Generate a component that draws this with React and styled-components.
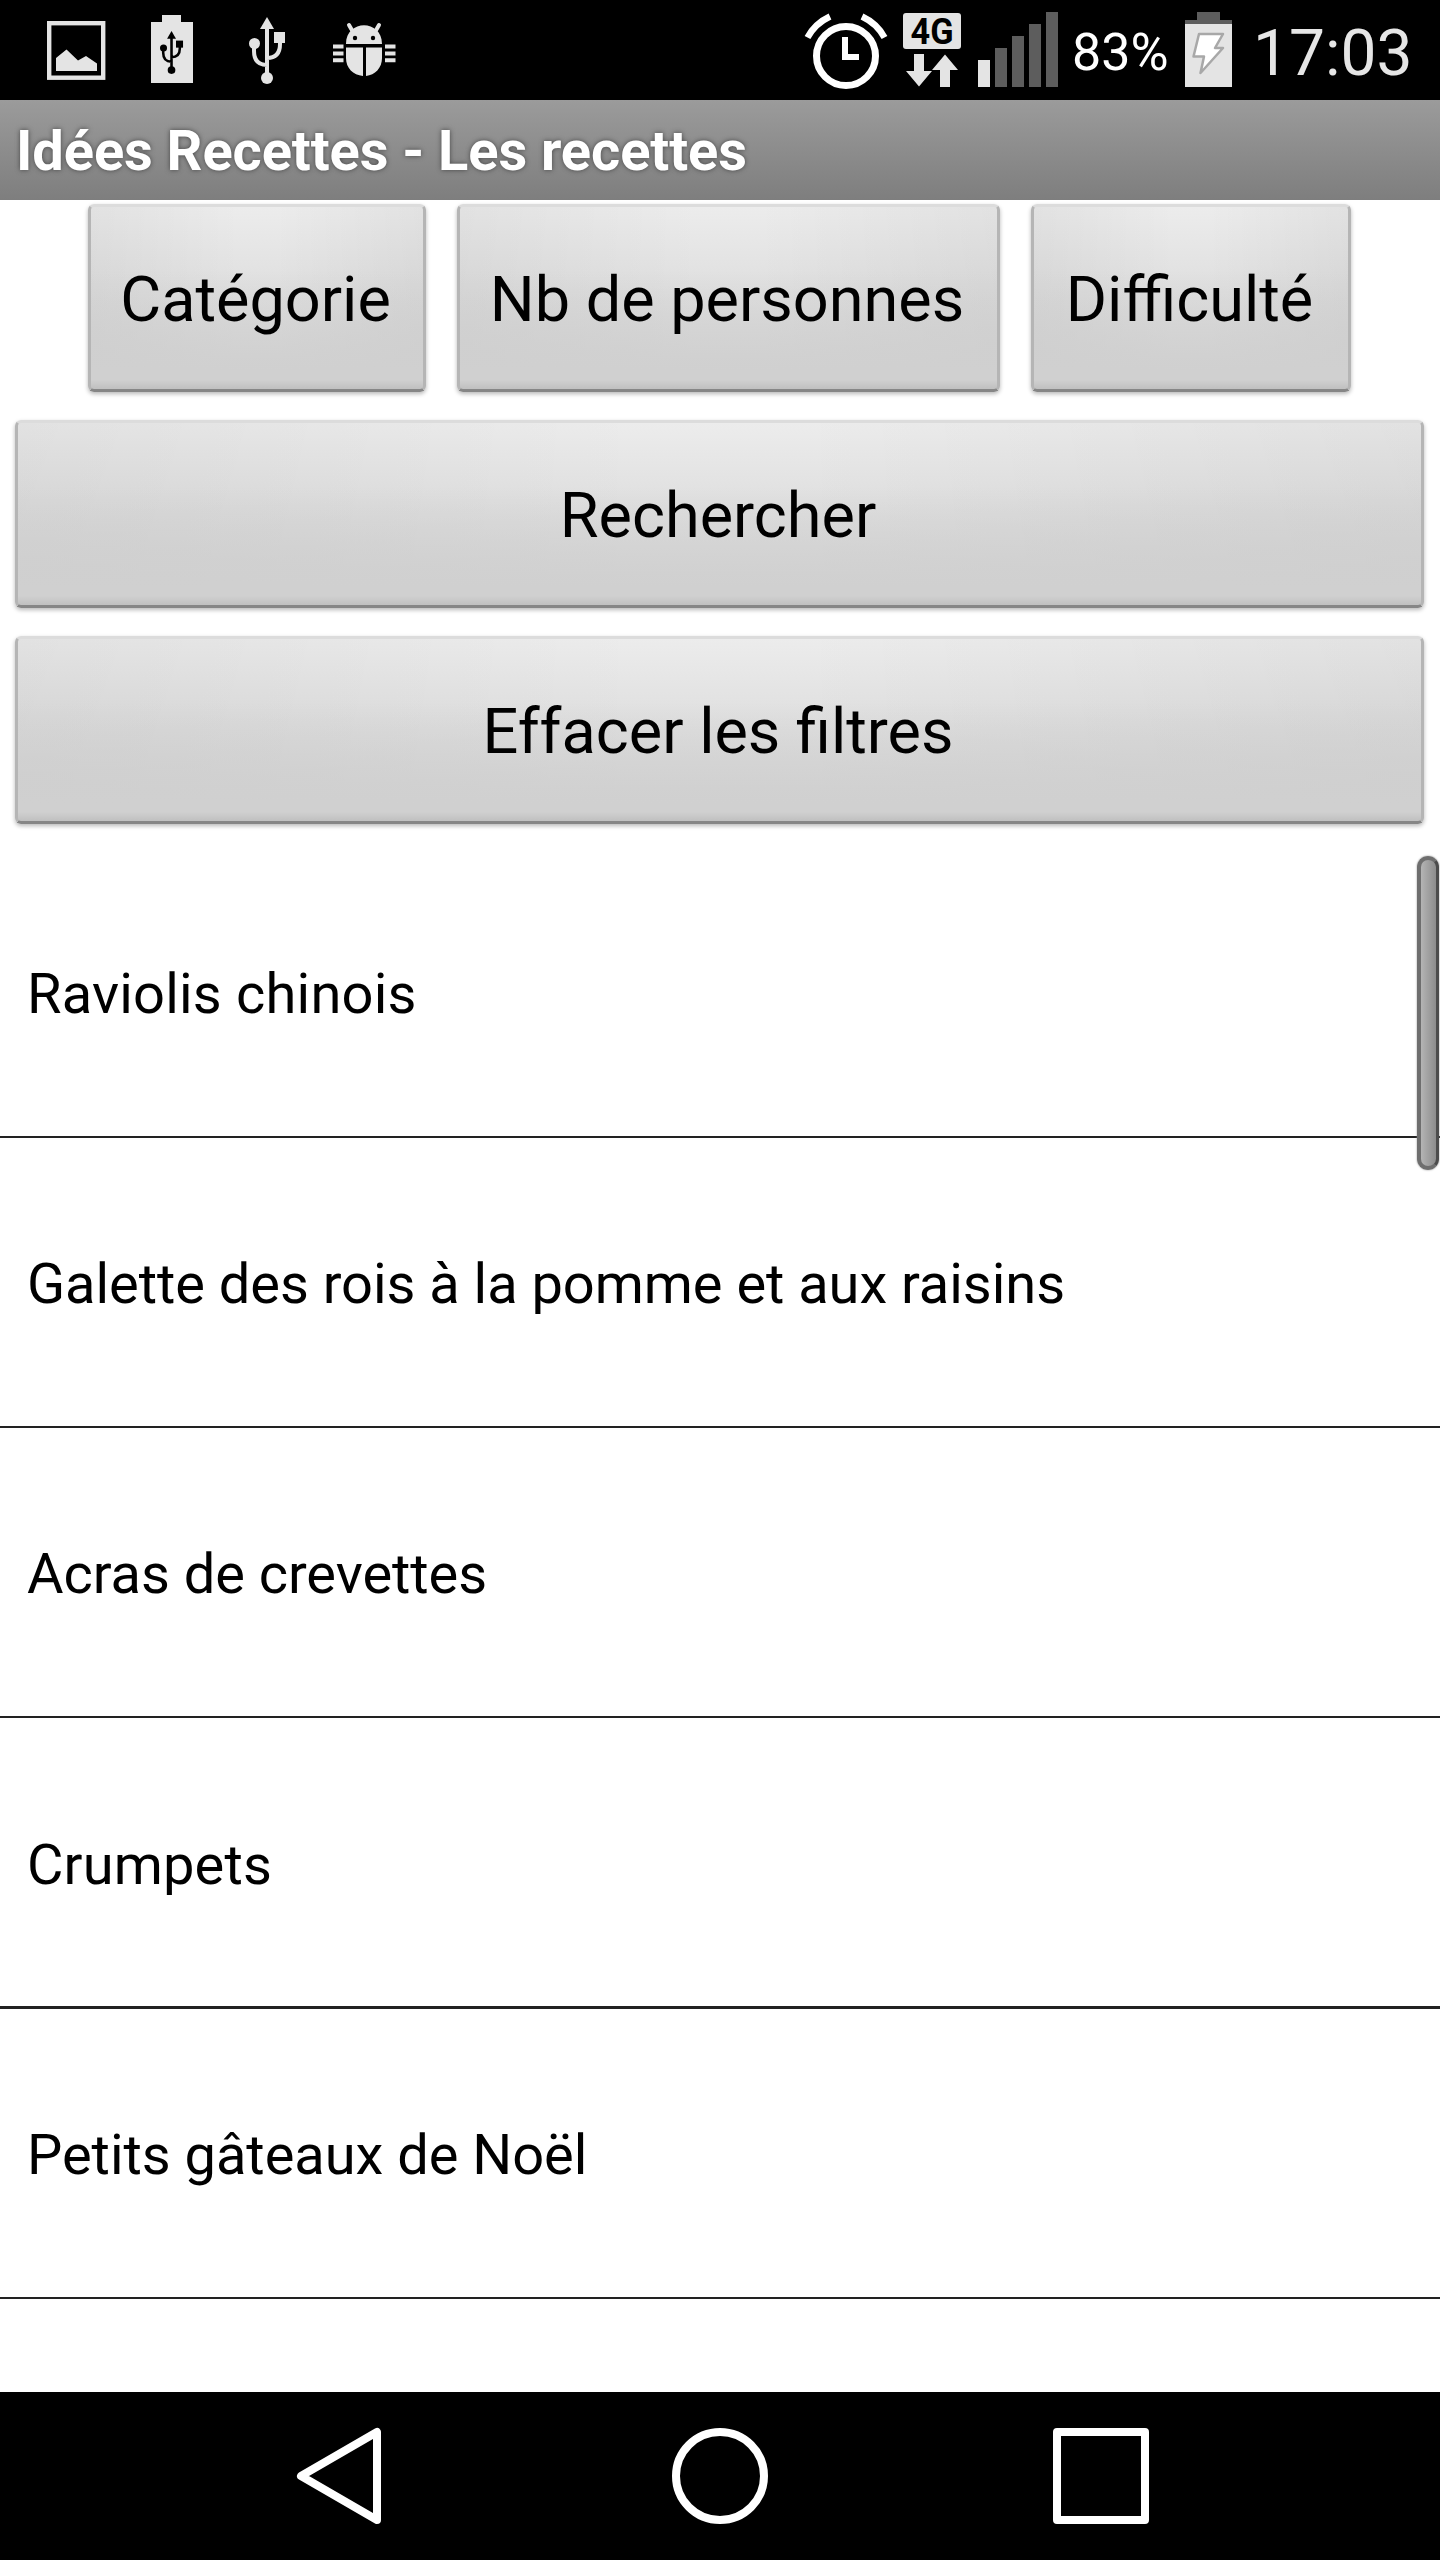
import React from 'react';
import styled, { createGlobalStyle } from 'styled-components';

const GlobalStyle = createGlobalStyle`
    * {
        box-sizing: border-box;
    }
    body {
        margin: 0;
        background: #fff;
        font-family: Roboto, "Noto Sans", sans-serif;
    }
`

const Screen = styled.div`
    width: 1440px;
    height: 2560px;
    display: flex;
    flex-direction: column;
    overflow: hidden;
    background: #fff;
    color: #000;
`

const StatusBar = styled.header`
    height: 100px;
    flex: none;
    display: flex;
    justify-content: space-between;
    padding: 0 27px 0 47px;
    background: #000;
`

const StatusGroup = styled.div`
    display: flex;
    align-items: flex-start;
`

const StatusSvg = styled.svg`
    display: block;
    flex: none;
    height: 100px;
    margin-left: ${props => props.$left || 0}px;
`

const Percent = styled.span`
    width: 96px;
    margin-left: 14px;
    font-size: 52px;
    line-height: 106px;
    color: #fff;
    white-space: nowrap;
`

const Clock = styled.time`
    width: 160px;
    margin-left: 21px;
    font-size: 64px;
    line-height: 107px;
    color: #e6e6e6;
    white-space: nowrap;
`

const TitleBar = styled.h1`
    height: 100px;
    flex: none;
    margin: 0;
    padding-left: 16px;
    font-size: 56px;
    font-weight: bold;
    line-height: 102px;
    letter-spacing: -0.08px;
    color: #fff;
    text-shadow: 0 0 5px #444;
    background: linear-gradient(#9b9b9b, #7e7e7e);
`

const Filters = styled.section`
    flex: none;
    display: flex;
    flex-direction: column;
    gap: 28px;
    padding: 4px 16px 0 15px;
`

const FilterRow = styled.div`
    display: flex;
    justify-content: center;
    gap: 31px;
`

const Button = styled.button`
    width: ${props => props.$width || '100%'};
    height: 188px;
    padding: 3px 3px 0 0;
    border: 3px solid #b5b5b5;
    border-top-color: #dcdcdc;
    border-bottom-color: #868686;
    border-radius: 6px;
    font-family: inherit;
    font-size: 63px;
    line-height: 75px;
    color: #000;
    background:
        linear-gradient(transparent 95%, rgba(0, 0, 0, 0.08)),
        linear-gradient(rgba(208, 208, 208, 0) 35%, #d0d0d0 90%),
        linear-gradient(to right, rgba(0, 0, 0, 0.045), transparent 45%, transparent 55%, rgba(0, 0, 0, 0.045)),
        linear-gradient(#ececec, #dedede 50%, #d3d3d3);
    box-shadow: 0 2px 4px rgba(0, 0, 0, 0.28);
`

const ListArea = styled.main`
    position: relative;
    flex: 1;
    min-height: 0;
    margin-top: 24px;
    overflow: hidden;
`

const List = styled.ul`
    margin: 0;
    padding: 0;
    list-style: none;
`

const ListItem = styled.li`
    height: 290px;
    display: flex;
    align-items: center;
    padding: 4px 0 0 27px;
    border-bottom: 2px solid #222;
    font-size: 56px;
    line-height: 66px;
    letter-spacing: ${props => props.$spacing || 0}px;

    &:nth-child(4) {
        height: 291px;
        padding-top: 6px;
        border-bottom-width: 3px;
    }
`

const ScrollThumb = styled.div`
    position: absolute;
    top: 8px;
    right: 1px;
    width: 22px;
    height: 314px;
    border: 4px solid #6e6e6e;
    border-right: 3px solid #4c4c4c;
    border-radius: 11px;
    background: linear-gradient(to right, #b4b4b4, #8c8c8c);
    box-shadow: 0 0 2px #888;
`

const NavBar = styled.nav`
    height: 168px;
    flex: none;
    display: flex;
    align-items: center;
    justify-content: space-between;
    padding: 0 289px;
    background: #000;
`

const NavIcon = styled.svg`
    display: block;
    fill: none;
    stroke: #fff;
    stroke-width: 8;
    stroke-linejoin: round;
`

const grey = '#e4e4e4'

const UsbShape = ({ color }) => (
    <g fill={color}>
        <path d="M18 0 L25 12 H11Z" />
        <circle cx="18" cy="61" r="6" />
        <circle cx="5.500" cy="26.500" r="5.500" />
        <rect x="25" y="15" width="11" height="11" />
        <path d="M18 10 V58 M5 28 V34 Q5 48 18 48 M31 24 V27 Q31 41 18 41" fill="none" stroke={color} strokeWidth="4" />
    </g>
)

const PictureIcon = () => (
    <StatusSvg width="59" viewBox="0 0 59 100">
        <rect x="2.200" y="23.200" width="54" height="54.500" fill="none" stroke={grey} strokeWidth="4.400" />
        <path d="M9 58 L19.500 49.500 L31 60.500 L39 56 L50 63.500 V71 H9Z" fill={grey} />
    </StatusSvg>
)

const BatteryUsbIcon = () => (
    <StatusSvg width="42" viewBox="0 0 42 100" $left={45}>
        <path d="M0 22 H11 V15 H30 V22 H42 V83 H0Z" fill={grey} />
        <g transform="translate(9 31) scale(0.64)">
            <UsbShape color="#000" />
        </g>
    </StatusSvg>
)

const UsbIcon = () => (
    <StatusSvg width="36" viewBox="0 0 36 100" $left={56}>
        <g transform="translate(0 17)">
            <UsbShape color={grey} />
        </g>
    </StatusSvg>
)

const BugIcon = () => (
    <StatusSvg width="63" viewBox="0 0 63 100" $left={48}>
        <path d="M13 44 C13 19 49 19 49 44Z M13 47.500 H30 V76 C20 75 13 68 13 58Z M33 47.500 H49 V58 C49 68 42 75 33 76Z" fill={grey} />
        <path d="M16 25 L20 32 M46 25 L42 32" stroke={grey} strokeWidth="4" strokeLinecap="round" />
        <path d="M0 46.500 H10.500 M0 53.500 H10.500 M0 60.300 H10.500 M52 46.500 H62.500 M52 53.500 H62.500 M52 60.300 H62.500" stroke={grey} strokeWidth="4" />
        <circle cx="22" cy="38" r="2.200" />
        <circle cx="40" cy="38" r="2.200" />
    </StatusSvg>
)

const AlarmIcon = () => (
    <StatusSvg width="84" viewBox="0 0 84 100">
        <g fill="none" stroke="#fff">
            <circle cx="42" cy="56" r="29.500" strokeWidth="7" />
            <path d="M3.500 37.500 Q11 23.500 26 16.500 M80.500 37.500 Q73 23.500 58 16.500" strokeWidth="6.500" />
            <path d="M41 37 V57 H55" strokeWidth="6" />
        </g>
    </StatusSvg>
)

const NetworkIcon = () => (
    <StatusSvg width="58" viewBox="0 0 58 100" $left={15}>
        <rect y="13" width="58" height="36" rx="3" fill={grey} />
        <text x="29" y="43.500" textAnchor="middle" fontSize="36" fontWeight="bold" textLength="43" lengthAdjust="spacingAndGlyphs">4G</text>
        <path d="M11 54 H21 V71 H29 L16 86.500 L3 71 H11Z M42 54.500 L55 70 H47 V87 H37 V70 H29Z" fill={grey} />
    </StatusSvg>
)

const SignalIcon = () => (
    <StatusSvg width="80" viewBox="0 0 80 100" $left={17}>
        {[60, 48, 36, 24, 12].map((top, i) => (
            <rect key={top} x={i * 17} y={top} width="12" height={87 - top} fill={i === 0 ? grey : '#5d5d5d'} />
        ))}
    </StatusSvg>
)

const BatteryIcon = () => (
    <StatusSvg width="47" viewBox="0 0 47 100" $left={17}>
        <path d="M0 20 H12 V12 H35 V20 H47 V24 H0Z" fill="#5d5d5d" />
        <rect y="24" width="47" height="63" fill={grey} />
        <path d="M14 34 H38 L30 48 H38 L15.500 73 L19 56.500 H8.500Z" fill="#fff" stroke="#a8a8a8" strokeWidth="2.500" strokeLinejoin="round" />
    </StatusSvg>
)

const filters = [
    { label: 'Catégorie', width: '338px' },
    { label: 'Nb de personnes', width: '543px' },
    { label: 'Difficulté', width: '320px' }
]

const recettes = [
    { nom: 'Raviolis chinois', spacing: 0.2 },
    { nom: 'Galette des rois à la pomme et aux raisins', spacing: -0.04 },
    { nom: 'Acras de crevettes', spacing: -0.05 },
    { nom: 'Crumpets', spacing: 0.15 },
    { nom: 'Petits gâteaux de Noël', spacing: -0.03 }
]

const App = () => {

    return (
        <Screen>
            <GlobalStyle />

            <StatusBar>
                <StatusGroup>
                    <PictureIcon />
                    <BatteryUsbIcon />
                    <UsbIcon />
                    <BugIcon />
                </StatusGroup>
                <StatusGroup>
                    <AlarmIcon />
                    <NetworkIcon />
                    <SignalIcon />
                    <Percent>83%</Percent>
                    <BatteryIcon />
                    <Clock>17:03</Clock>
                </StatusGroup>
            </StatusBar>

            <TitleBar>Idées Recettes - Les recettes</TitleBar>

            <Filters>
                <FilterRow>
                    {filters.map(f => (
                        <Button key={f.label} type="button" $width={f.width}>{f.label}</Button>
                    ))}
                </FilterRow>
                <Button type="button">Rechercher</Button>
                <Button type="button">Effacer les filtres</Button>
            </Filters>

            <ListArea>
                <List>
                    {recettes.map(r => (
                        <ListItem key={r.nom} $spacing={r.spacing}>{r.nom}</ListItem>
                    ))}
                </List>
                <ScrollThumb />
            </ListArea>

            <NavBar>
                <NavIcon width="100" height="100" viewBox="0 0 100 100">
                    <path d="M12 50 L88 6 V94Z" />
                </NavIcon>
                <NavIcon width="100" height="100" viewBox="0 0 100 100">
                    <circle cx="50" cy="50" r="44" />
                </NavIcon>
                <NavIcon width="100" height="100" viewBox="0 0 100 100">
                    <rect x="6" y="6" width="88" height="88" />
                </NavIcon>
            </NavBar>
        </Screen>
    )
}

export default App
